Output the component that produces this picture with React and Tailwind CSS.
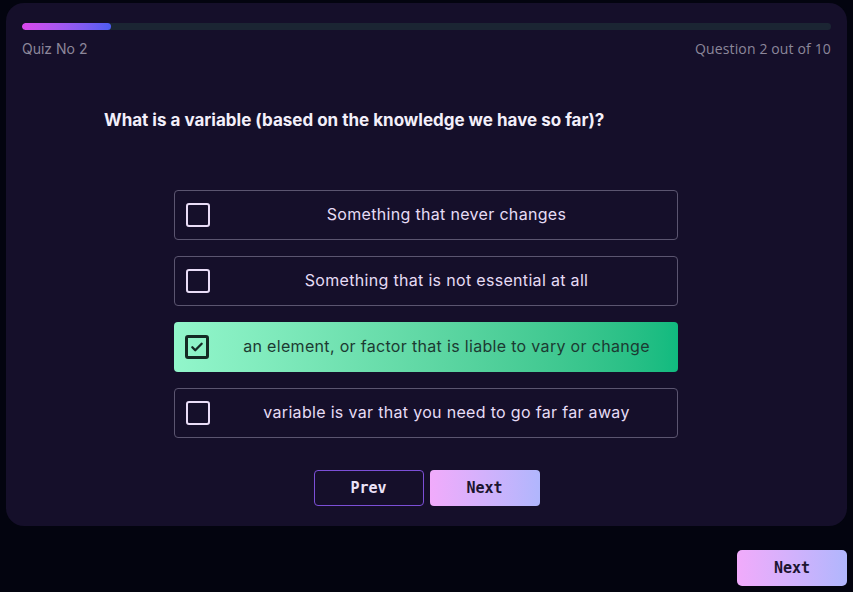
import { useState } from 'react';

const options = [
    'Something that never changes',
    'Something that is not essential at all',
    'an element, or factor that is liable to vary or change',
    'variable is var that you need to go far far away',
];

function CheckBox({ checked }) {
    if (checked) {
        return (
            <span className="w-[24px] h-[24px] rounded-[3px] border-[3px] border-[#142a24] flex items-center justify-center shrink-0">
                <svg width="14" height="14" viewBox="0 0 24 24" fill="none" stroke="#142a24" strokeWidth="4" strokeLinecap="round" strokeLinejoin="round">
                    <path d="M4 12.5l5 5L20 6.5" />
                </svg>
            </span>
        );
    }
    return <span className="w-[24px] h-[24px] rounded-[3px] border-[2px] border-[#e9dcf7] shrink-0" />;
}

export default function App() {
    const [selected, setSelected] = useState(2);

    return (
        <div className="w-[853px] h-[592px] bg-[#03040f] relative" style={{ fontFamily: 'Inter, "Noto Sans", sans-serif' }}>
            <div className="absolute left-[6px] top-[3px] w-[841px] h-[523px] rounded-[18px] bg-[#150f2a] px-[16px] pt-[20px]">
                <div className="h-[7px] rounded-full bg-[#1b2533] overflow-hidden">
                    <div className="h-full w-[89px] rounded-full bg-gradient-to-r from-[#dc46ee] to-[#4c5cf2]" />
                </div>
                <div className="flex justify-between items-center h-[20px] mt-[8px] text-[14px] text-[#8c879a]">
                    <span>Quiz No 2</span>
                    <span className="font-['Open_Sans',sans-serif] tracking-[0.01em]">Question 2 out of 10</span>
                </div>

                <h2 className="ml-[82px] mt-[50px] text-[17px] leading-[24px] font-bold text-[#f3effa]">
                    What is a variable (based on the knowledge we have so far)?
                </h2>

                <div className="mt-[58px] ml-[152px] w-[504px] flex flex-col gap-[16px]">
                    {options.map((opt, i) => {
                        const on = i === selected;
                        return (
                            <button
                                key={i}
                                onClick={() => setSelected(i)}
                                className={
                                    on
                                        ? 'h-[50px] rounded-[4px] pl-[11px] flex items-center bg-gradient-to-r from-[#92f6cb] to-[#10ba7f] text-[#1c3a32]'
                                        : 'h-[50px] rounded-[4px] pl-[11px] flex items-center border border-[#5b5570] text-[#e6dcf5]'
                                }
                            >
                                <CheckBox checked={on} />
                                <span className="flex-1 ml-[6px] pb-[3px] text-center text-[16px] tracking-[0.02em]">{opt}</span>
                            </button>
                        );
                    })}
                </div>

                <div className="mt-[32px] flex justify-center gap-[6px] font-['DejaVu_Sans_Mono',monospace] font-bold text-[15px]">
                    <button className="w-[110px] h-[36px] rounded-[4px] border border-[#7b4fd6] text-[#ece3f8]">Prev</button>
                    <button className="w-[110px] h-[36px] rounded-[4px] bg-gradient-to-r from-[#f1abfb] to-[#b0b6fd] text-[#1c1530]">Next</button>
                </div>
            </div>

            <button className="absolute left-[737px] top-[550px] w-[110px] h-[36px] rounded-[5px] bg-gradient-to-r from-[#f1abfb] to-[#b0b6fd] text-[#1c1530] font-['DejaVu_Sans_Mono',monospace] font-bold text-[15px]">
                Next
            </button>
        </div>
    );
}
